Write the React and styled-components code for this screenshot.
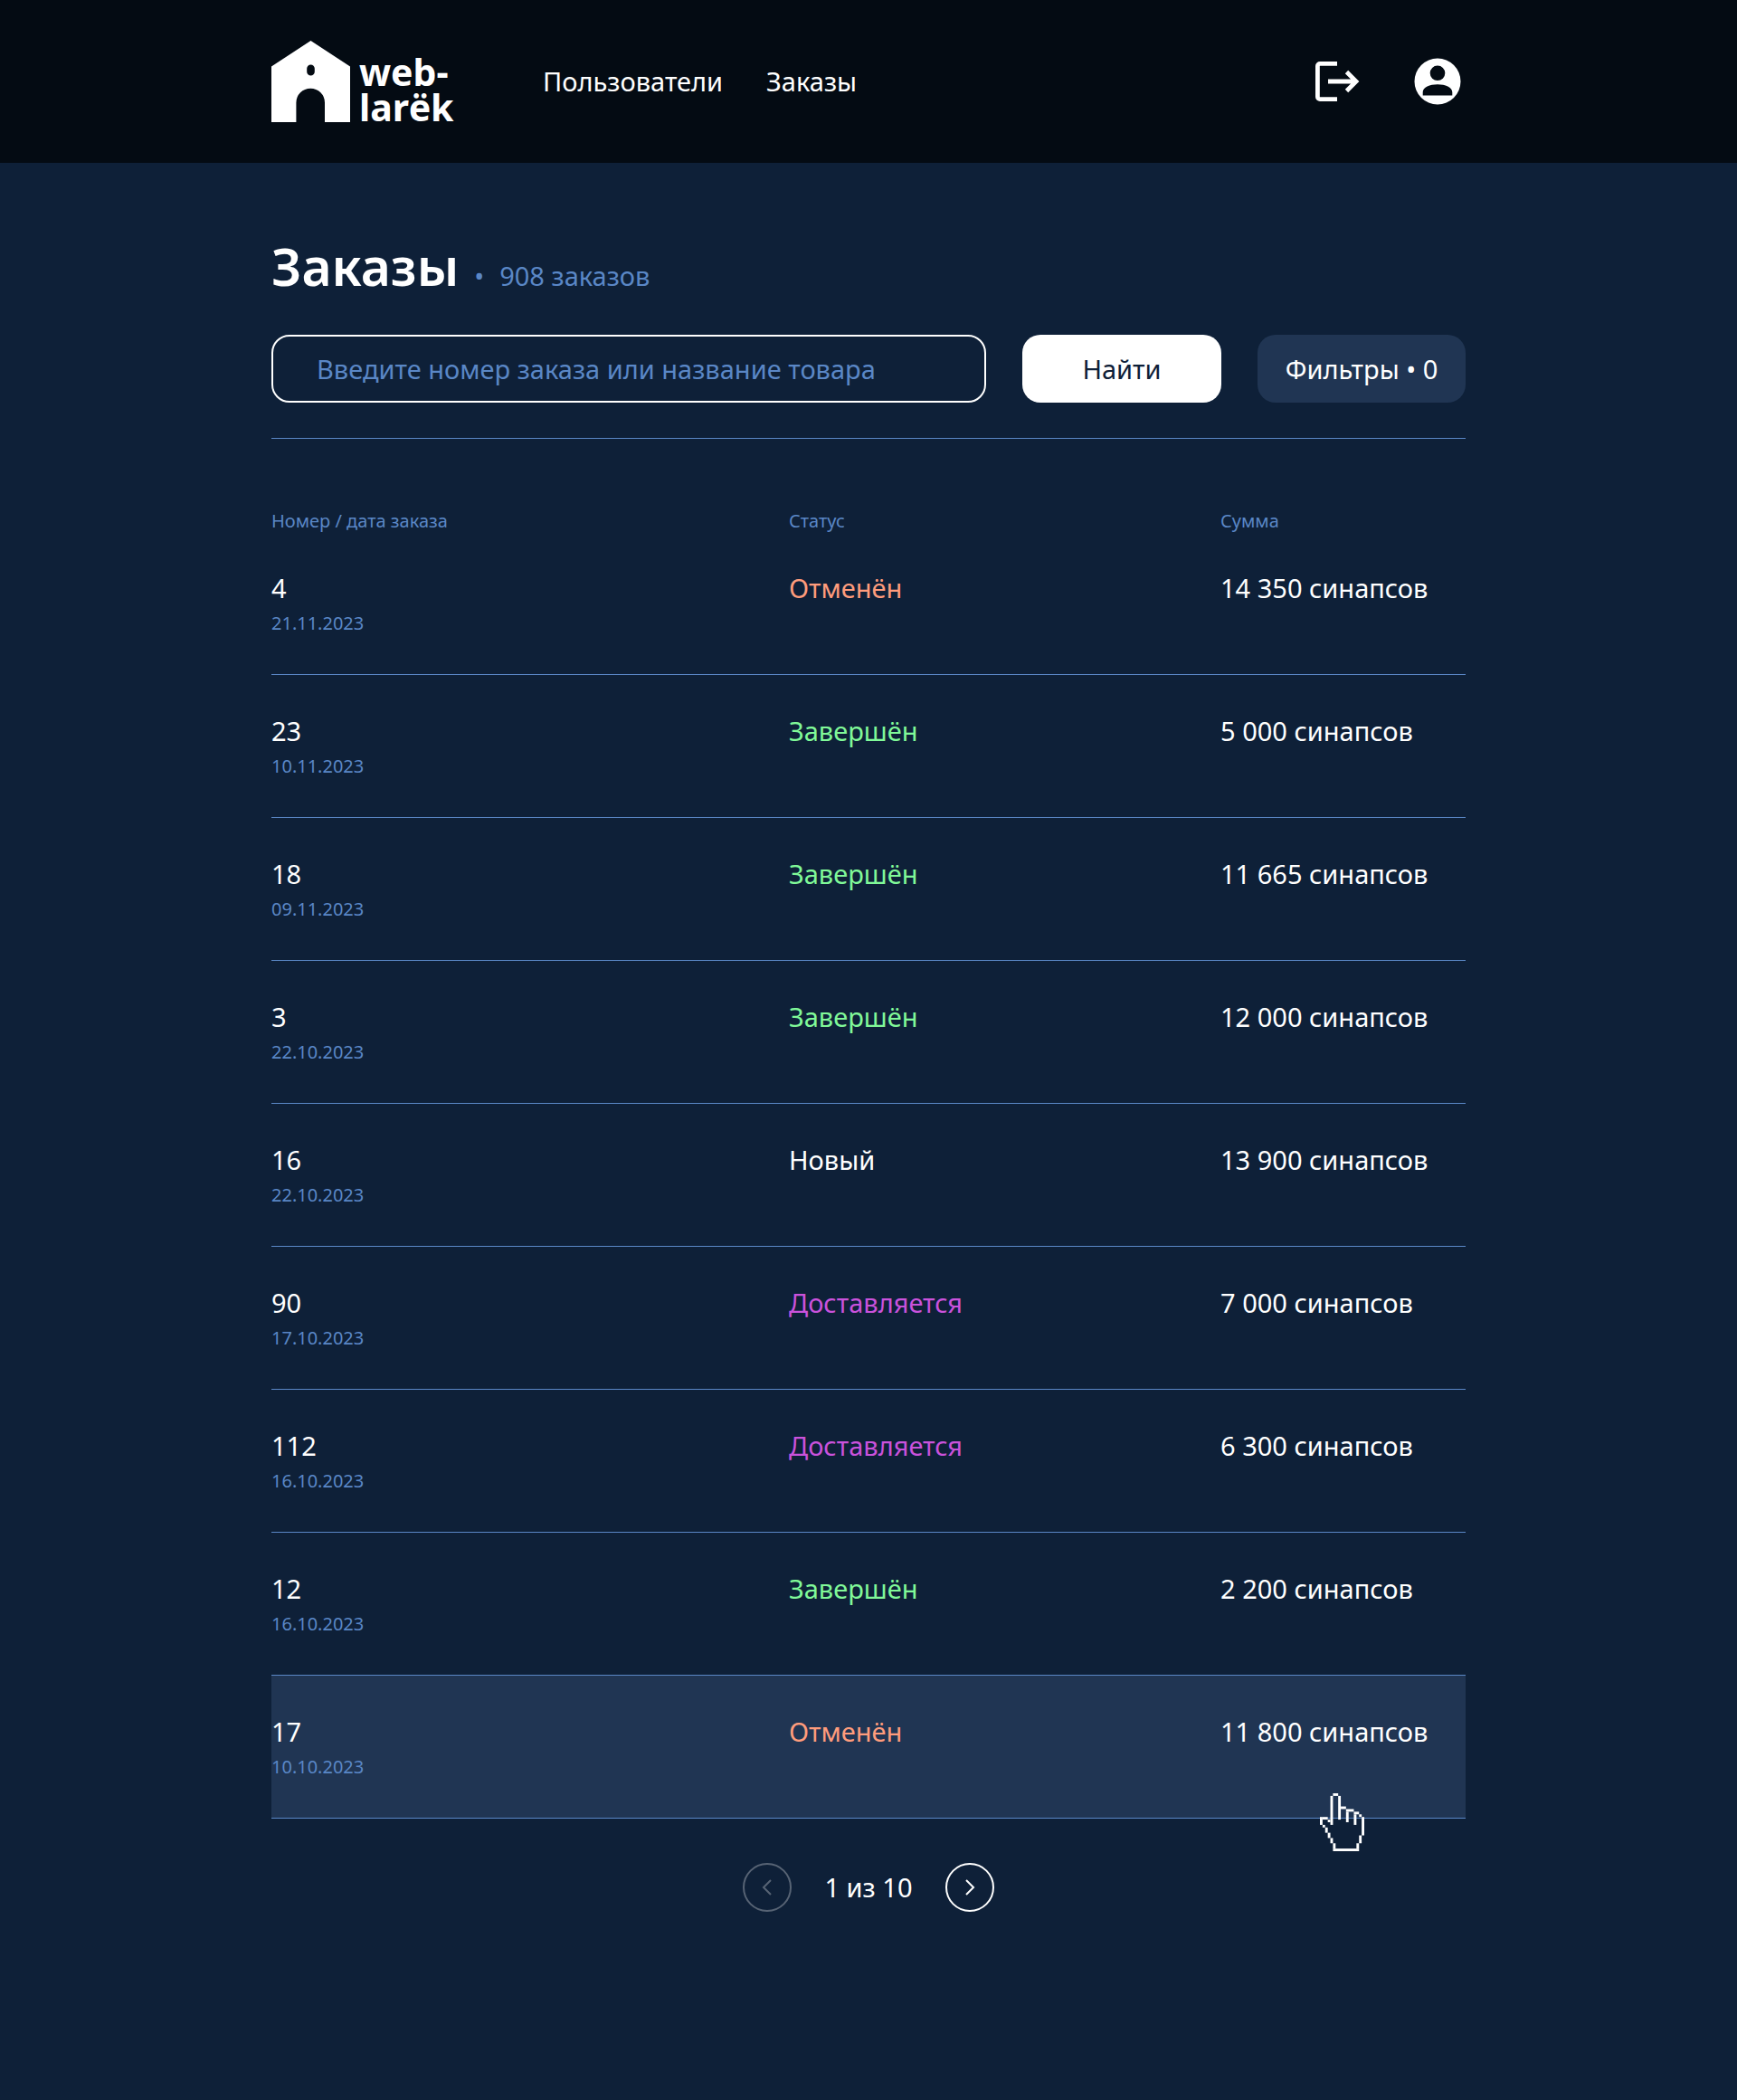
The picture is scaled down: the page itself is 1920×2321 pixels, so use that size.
import React from "react";
import styled, { createGlobalStyle } from "styled-components";

const color = {
  header: "#040b13",
  page: "#0e2038",
  panel: "#203553",
  blue: "#5a87c6",
  white: "#ffffff",
  cancelled: "#ff9c7c",
  done: "#80f998",
  fresh: "#ffffff",
  shipping: "#ca52dc",
};

const GlobalStyle = createGlobalStyle`
  *, *::before, *::after { box-sizing: border-box; }
  body {
    margin: 0;
    background: ${color.page};
    color: ${color.white};
    font-family: "Noto Sans", "Open Sans", sans-serif;
    font-size: 29px;
    line-height: 38px;
  }
  button, input { font: inherit; color: inherit; }
  a { color: inherit; text-decoration: none; }
`;

const Container = styled.div`
  width: 100%;
  max-width: 1400px;
  margin: 0 auto;
  padding: 0 40px;
`;

const Header = styled.header`
  background: ${color.header};
`;

const HeaderBar = styled(Container)`
  display: flex;
  align-items: center;
  height: 180px;
`;

const Logo = styled.a`
  display: flex;
  align-items: flex-start;
  gap: 10px;
  width: 200px;
  height: 90px;
  margin-right: 100px;
`;

const LogoMark = styled.svg`
  flex: none;
  width: 87px;
  height: 90px;
`;

const LogoText = styled.span`
  padding-top: 15px;
  font-size: 41px;
  line-height: 39px;
  font-weight: 700;
  white-space: nowrap;
`;

const LogoLine = styled.span`
  display: block;
`;

const Nav = styled.nav`
  display: flex;
  gap: 48px;
`;

const Actions = styled.div`
  display: flex;
  gap: 56px;
  margin-left: auto;
`;

const IconButton = styled.button`
  display: flex;
  padding: 0;
  border: 0;
  background: none;
  cursor: pointer;
`;

const Heading = styled.div`
  display: flex;
  align-items: baseline;
  gap: 17px;
  padding-top: 79px;
  color: ${color.blue};
`;

const Title = styled.h1`
  margin: 0;
  color: ${color.white};
  font-size: 57px;
  line-height: 70px;
  font-weight: 600;
`;

const Search = styled.form`
  display: grid;
  grid-template-columns: 1fr 220px 230px;
  gap: 40px;
  margin-top: 41px;
  padding-bottom: 39px;
  border-bottom: 1px solid ${color.blue};
`;

const SearchInput = styled.input`
  width: 100%;
  height: 75px;
  padding: 0 48px;
  border: 2px solid ${color.white};
  border-radius: 20px;
  background: transparent;
  &::placeholder { color: ${color.blue}; opacity: 1; }
`;

const Button = styled.button`
  height: 75px;
  padding: 0;
  border: 0;
  border-radius: 20px;
  white-space: nowrap;
  cursor: pointer;
  background: ${(p) => (p.$primary ? color.white : color.panel)};
  color: ${(p) => (p.$primary ? color.page : color.white)};
`;

const Orders = styled.table`
  width: 100%;
  margin-top: 79px;
  border-collapse: separate;
  border-spacing: 0;
  table-layout: fixed;
`;

const HeadCell = styled.th`
  width: ${(p) => p.$width};
  padding: 0;
  text-align: left;
  font-size: 20px;
  line-height: 24px;
  font-weight: 400;
  color: ${color.blue};
`;

const Row = styled.tr`
  background: ${(p) => (p.$active ? color.panel : "transparent")};
`;

const Cell = styled.td`
  padding: 43px 0 42px;
  border-bottom: 1px solid ${color.blue};
  vertical-align: top;
  white-space: nowrap;
  color: ${(p) => color[p.$tone] || color.white};
`;

const OrderDate = styled.time`
  display: block;
  margin-top: 6px;
  font-size: 20px;
  line-height: 28px;
  color: ${color.blue};
`;

const TableArea = styled.div`
  position: relative;
`;

const Pointer = styled.svg`
  position: absolute;
  right: 112px;
  bottom: -36px;
  width: 49px;
  height: 64px;
  pointer-events: none;
`;

const Pagination = styled.nav`
  display: flex;
  align-items: center;
  justify-content: center;
  gap: 36px;
  padding: 49px 0 208px;
`;

const PageButton = styled.button`
  display: flex;
  align-items: center;
  justify-content: center;
  width: 54px;
  height: 54px;
  padding: 0;
  border: 2px solid ${color.white};
  border-radius: 50%;
  background: none;
  color: ${color.white};
  &:disabled { opacity: 0.3; }
`;

const STATUS = {
  cancelled: "Отменён",
  done: "Завершён",
  fresh: "Новый",
  shipping: "Доставляется",
};

const ORDERS = [
  { id: 4, date: "21.11.2023", status: "cancelled", sum: "14 350" },
  { id: 23, date: "10.11.2023", status: "done", sum: "5 000" },
  { id: 18, date: "09.11.2023", status: "done", sum: "11 665" },
  { id: 3, date: "22.10.2023", status: "done", sum: "12 000" },
  { id: 16, date: "22.10.2023", status: "fresh", sum: "13 900" },
  { id: 90, date: "17.10.2023", status: "shipping", sum: "7 000" },
  { id: 112, date: "16.10.2023", status: "shipping", sum: "6 300" },
  { id: 12, date: "16.10.2023", status: "done", sum: "2 200" },
  { id: 17, date: "10.10.2023", status: "cancelled", sum: "11 800", active: true },
];

function HouseIcon() {
  return (
    <LogoMark viewBox="0 0 87 90" aria-hidden="true">
      <path
        fill="#fff"
        fillRule="evenodd"
        d="M43.5 0 87 28.5V90H59V68.500a15.800 15.800 0 0 0-31.600 0V90H0V28.500ZM43.500 26.500a4.300 4.300 0 0 0-4.300 4.300v3.500a4.300 4.300 0 0 0 8.600 0v-3.500a4.300 4.300 0 0 0-4.300-4.300Z"
      />
    </LogoMark>
  );
}

function LogoutIcon() {
  return (
    <svg width="60" height="60" viewBox="0 0 60 60" fill="none" stroke="#fff" strokeWidth="4.800" aria-hidden="true">
      <path d="M34 10.400H15a2.600 2.600 0 0 0-2.600 2.600v34a2.600 2.600 0 0 0 2.600 2.600H34" />
      <path d="M24 30H54M44.500 19.500 55 30 44.500 40.500" />
    </svg>
  );
}

function AccountIcon() {
  return (
    <svg width="60" height="60" viewBox="0 0 60 60" aria-hidden="true">
      <path
        fill="#fff"
        fillRule="evenodd"
        d="M29 4.500a25.500 25.500 0 1 1 0 51a25.500 25.500 0 1 1 0-51ZM29 12.500a8.300 8.300 0 1 0 0 16.600a8.300 8.300 0 1 0 0-16.600ZM12.700 45.500h32.600v-3.500C45.300 36.500 37.500 33.300 29 33.300S12.700 36.500 12.700 42Z"
      />
    </svg>
  );
}

function Chevron({ left }) {
  return (
    <svg width="12" height="20" viewBox="0 0 12 20" fill="none" stroke="currentColor" strokeWidth="2" aria-hidden="true">
      <path d={left ? "M10 2 2 10l8 8" : "M2 2l8 8-8 8"} />
    </svg>
  );
}

// Hand outline on a 17 by 22 grid: [column, row, width, height]
const HAND = [
  [5, 0, 2, 1], [4, 1, 1, 11], [7, 1, 1, 9], [8, 5, 2, 1], [10, 6, 3, 1],
  [10, 7, 1, 4], [13, 7, 2, 1], [13, 8, 1, 4], [15, 8, 1, 1], [16, 9, 1, 7],
  [15, 16, 1, 3], [14, 19, 1, 2], [5, 21, 10, 1], [5, 19, 1, 2], [4, 17, 1, 2],
  [3, 15, 1, 2], [2, 13, 1, 2], [1, 12, 1, 1], [0, 9, 1, 3], [1, 9, 2, 1], [3, 10, 1, 1],
];

function HandPointer() {
  return (
    <Pointer viewBox="0 0 17 22" preserveAspectRatio="none" fill="#fff" aria-hidden="true">
      {HAND.map(([x, y, w, h]) => (
        <rect key={`${x}-${y}`} x={x} y={y} width={w} height={h} />
      ))}
    </Pointer>
  );
}

export default function App() {
  return (
    <>
      <GlobalStyle />
      <Header>
        <HeaderBar>
          <Logo href="#">
            <HouseIcon />
            <LogoText>
              <LogoLine>web-</LogoLine>
              <LogoLine>larёk</LogoLine>
            </LogoText>
          </Logo>
          <Nav>
            <a href="#users">Пользователи</a>
            <a href="#orders">Заказы</a>
          </Nav>
          <Actions>
            <IconButton type="button" aria-label="Выйти"><LogoutIcon /></IconButton>
            <IconButton type="button" aria-label="Профиль"><AccountIcon /></IconButton>
          </Actions>
        </HeaderBar>
      </Header>
      <Container as="main">
        <Heading>
          <Title>Заказы</Title>
          <span>•</span>
          <span>908 заказов</span>
        </Heading>
        <Search onSubmit={(e) => e.preventDefault()}>
          <SearchInput
            type="text"
            aria-label="Поиск заказа"
            placeholder="Введите номер заказа или название товара"
          />
          <Button type="submit" $primary>Найти</Button>
          <Button type="button">Фильтры • 0</Button>
        </Search>
        <TableArea>
          <Orders>
            <thead>
              <tr>
                <HeadCell $width="auto">Номер / дата заказа</HeadCell>
                <HeadCell $width="477px">Статус</HeadCell>
                <HeadCell $width="271px">Сумма</HeadCell>
              </tr>
            </thead>
            <tbody>
              {ORDERS.map((o) => (
                <Row key={o.id} $active={o.active}>
                  <Cell>
                    {o.id}
                    <OrderDate>{o.date}</OrderDate>
                  </Cell>
                  <Cell $tone={o.status}>{STATUS[o.status]}</Cell>
                  <Cell>{o.sum} синапсов</Cell>
                </Row>
              ))}
            </tbody>
          </Orders>
          <HandPointer />
        </TableArea>
        <Pagination aria-label="Страницы">
          <PageButton type="button" aria-label="Назад" disabled><Chevron left /></PageButton>
          <span>1 из 10</span>
          <PageButton type="button" aria-label="Вперёд"><Chevron /></PageButton>
        </Pagination>
      </Container>
    </>
  );
}
